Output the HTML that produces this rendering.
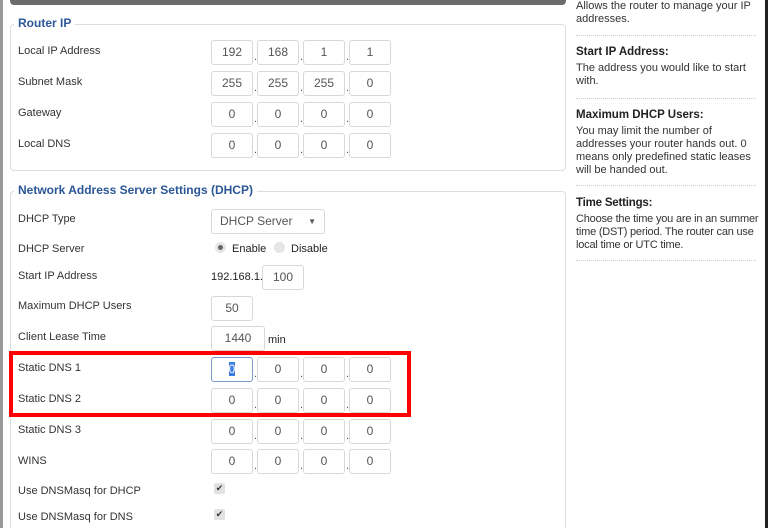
<!DOCTYPE html>
<html style="width:768px;height:528px;overflow:hidden"><head><meta charset="utf-8"><style>
*{box-sizing:border-box;margin:0;padding:0}
body{width:768px;height:528px;overflow:hidden;background:#fff;font-family:"Liberation Sans",sans-serif;font-size:11px;color:#222;position:relative}
.a{position:absolute}
.lbl{position:absolute;left:18px;font-size:11px;color:#333}
.in{position:absolute;width:42px;height:25px;border:1px solid #d8d8d8;border-radius:3px;text-align:center;line-height:23px;color:#555;font-size:12px}
.dot{position:absolute;font-size:11px;color:#555}
.fs{position:absolute;left:10px;width:556px;border:1px solid #ddd;border-radius:4px}
.lg{position:absolute;left:14px;background:#fff;padding:0 4px;font-weight:bold;color:#2b5797;font-size:12px}
.side{position:absolute;left:576px;font-size:11px;color:#333;line-height:13px;white-space:nowrap}
.side b{display:block;font-size:11.5px;color:#222;margin-bottom:3px}
.hr{position:absolute;left:576px;width:180px;border-top:1px dotted #ccc}
</style></head><body>
<div class="a" style="left:0;top:0;width:3px;height:528px;background:#999"></div>
<div class="a" style="left:10px;top:0;width:556px;height:5px;background:#6b6b6b;border-radius:0 0 4px 4px"></div>

<div class="fs" style="top:24px;height:147px"></div>
<div class="lg" style="top:16px">Router IP</div>
<div class="fs" style="top:191px;height:345px"></div>
<div class="lg" style="top:183px">Network Address Server Settings (DHCP)</div>

<div class="lbl" style="top:45px">Local IP Address</div>
<div class="lbl" style="top:76px">Subnet Mask</div>
<div class="lbl" style="top:107px">Gateway</div>
<div class="lbl" style="top:138px">Local DNS</div>

<div class="lbl" style="top:213px">DHCP Type</div>
<div class="lbl" style="top:243px">DHCP Server</div>
<div class="lbl" style="top:270px">Start IP Address</div>
<div class="lbl" style="top:300px">Maximum DHCP Users</div>
<div class="lbl" style="top:331px">Client Lease Time</div>
<div class="lbl" style="top:362px">Static DNS 1</div>
<div class="lbl" style="top:393px">Static DNS 2</div>
<div class="lbl" style="top:424px">Static DNS 3</div>
<div class="lbl" style="top:455px">WINS</div>
<div class="lbl" style="top:485px">Use DNSMasq for DHCP</div>
<div class="lbl" style="top:511px">Use DNSMasq for DNS</div>

<div id="rows"></div>
<script>
var rows=[[40,["192","168","1","1"]],[71,["255","255","255","0"]],[102,["0","0","0","0"]],[133,["0","0","0","0"]],[357,["","0","0","0"]],[388,["0","0","0","0"]],[419,["0","0","0","0"]],[449,["0","0","0","0"]]];
var h="";var xs=[211,257,303,349];
rows.forEach(function(r){for(var i=0;i<4;i++){h+='<div class="in" style="left:'+xs[i]+'px;top:'+r[0]+'px'+(r[0]==357&&i==0?';border:1px solid #7b98c8':'')+'">'+(r[0]==357&&i==0?'<span style="background:#3b7de0;color:#fff">0</span>':r[1][i])+'</div>';if(i<3)h+='<div class="dot" style="left:'+(xs[i]+43)+'px;top:'+(r[0]+11)+'px">.</div>';}});
document.getElementById("rows").innerHTML=h;
</script>

<div class="in" style="left:211px;top:209px;width:114px;height:25px;text-align:left;padding-left:8px;font-size:12px">DHCP Server<span style="position:absolute;right:8px;font-size:8px">▼</span></div>
<div class="a" style="left:215px;top:242px;width:11px;height:11px;border-radius:50%;background:#e6e6e6"><div style="margin:3px;width:5px;height:5px;border-radius:50%;background:#666"></div></div>
<div class="a" style="left:232px;top:243px;font-size:11px">Enable</div>
<div class="a" style="left:274px;top:242px;width:11px;height:11px;border-radius:50%;background:#e6e6e6"></div>
<div class="a" style="left:291px;top:243px;font-size:11px">Disable</div>
<div class="a" style="left:211px;top:271px;font-size:11px">192.168.1.</div>
<div class="in" style="left:262px;top:265px">100</div>
<div class="in" style="left:211px;top:296px">50</div>
<div class="in" style="left:211px;top:326px;width:54px">1440</div>
<div class="a" style="left:268px;top:334px;font-size:11px">min</div>
<div class="a" style="left:214px;top:483px;width:11px;height:11px;border-radius:2px;background:#e2e2e2;font-size:9px;line-height:11px;text-align:center;color:#333">✔</div>
<div class="a" style="left:214px;top:509px;width:11px;height:11px;border-radius:2px;background:#e2e2e2;font-size:9px;line-height:11px;text-align:center;color:#333">✔</div>

<div class="a" style="left:9px;top:351px;width:402px;height:66px;border:4px solid #f00"></div>

<div class="side" style="top:0">Allows the router to manage your IP<br>addresses.</div>
<div class="hr" style="top:35px"></div>
<div class="side" style="top:46px"><b>Start IP Address:</b>The address you would like to start<br>with.</div>
<div class="hr" style="top:98px"></div>
<div class="side" style="top:109px"><b>Maximum DHCP Users:</b>You may limit the number of<br>addresses your router hands out. 0<br>means only predefined static leases<br>will be handed out.</div>
<div class="hr" style="top:185px"></div>
<div class="side" style="top:197px;letter-spacing:-0.2px"><b>Time Settings:</b>Choose the time you are in an summer<br>time (DST) period. The router can use<br>local time or UTC time.</div>
<div class="hr" style="top:260px"></div>
<div class="a" style="left:765px;top:0;width:3px;height:528px;background:#222"></div>
</body></html>
